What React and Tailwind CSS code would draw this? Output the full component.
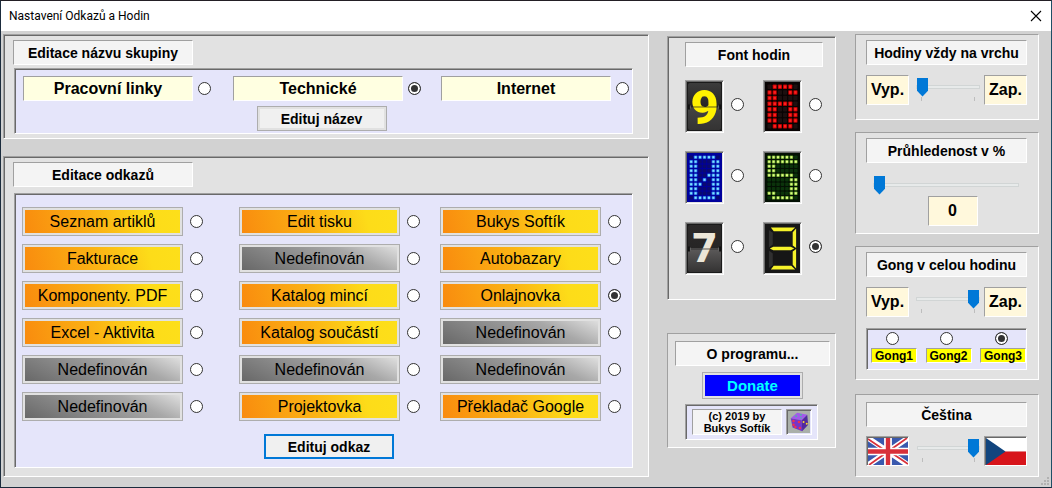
import { useState } from "react";
import clsx from "clsx";

const SUNKEN = "border border-t-[#a0a0a0] border-l-[#a0a0a0] border-r-white border-b-white";
const DEEP = "border border-t-[#a0a0a0] border-l-[#a0a0a0] border-r-white border-b-white shadow-[inset_1px_1px_0_#696969]";

const groups = ["Pracovní linky", "Technické", "Internet"];

const links = [
    ["Seznam artiklů", "Edit tisku", "Bukys Softík"],
    ["Fakturace", null, "Autobazary"],
    ["Komponenty. PDF", "Katalog mincí", "Onlajnovka"],
    ["Excel - Aktivita", "Katalog součástí", null],
    [null, null, null],
    [null, "Projektovka", "Překladač Google"],
];

const six = [".####.", "##..##", "##....", "#####.", "##..##", "##..##", "##..##", ".####."];
const zero = [".#####.", "##...##", "##...##", "##...##", "##..###", "##.#.##", "###..##", "##...##", "##...##", ".#####."];
const five = ["######.", "#######", "##.....", "##.....", "######.", ".....##", ".....##", ".....##", "##...##", ".#####."];

function Radio({ className, ...props }) {
    return (
        <input
            type="radio"
            className={clsx("m-0 size-[13px] shrink-0 appearance-none rounded-full border border-[#333333] bg-white checked:bg-[#333333] checked:shadow-[inset_0_0_0_2px_white]", className)}
            {...props}
        />
    );
}

function Caption({ children, className }) {
    return (
        <h2 className={clsx("flex h-[25px] items-center justify-center bg-[#f4f4f4] text-[14px] leading-4 font-bold whitespace-nowrap", SUNKEN, className)}>
            {children}
        </h2>
    );
}

function LinkButton({ text }) {
    return (
        <button type="button" className="h-[29px] w-[161px] shrink-0 border border-[#adadad] bg-[#e1e1e1] p-0.5">
            <span
                className={clsx(
                    "flex h-full items-center justify-center text-[16px] leading-5 whitespace-nowrap",
                    text
                        ? "bg-[linear-gradient(75deg,#f98b0e,#fbb214_45%,#fddc19_80%,#fddf1a)]"
                        : "bg-[linear-gradient(25deg,#686868,#a8a8a8_70%,#dedede)]"
                )}
            >
                {text || "Nedefinován"}
            </span>
        </button>
    );
}

function Slider({ label, value, onChange, max, ticks }) {
    return (
        <div className="min-w-0 flex-1">
            <input
                type="range"
                aria-label={label}
                min="0"
                max={max}
                value={value}
                onChange={e => onChange(Number(e.target.value))}
                className="block h-[19px] w-full appearance-none bg-transparent [&::-webkit-slider-runnable-track]:h-1 [&::-webkit-slider-runnable-track]:border [&::-webkit-slider-runnable-track]:border-[#d1d5d5] [&::-webkit-slider-runnable-track]:bg-[#e7eaea] [&::-webkit-slider-thumb]:-mt-2 [&::-webkit-slider-thumb]:h-[19px] [&::-webkit-slider-thumb]:w-[11px] [&::-webkit-slider-thumb]:appearance-none [&::-webkit-slider-thumb]:bg-[#0078d7] [&::-webkit-slider-thumb]:[clip-path:polygon(0_0,100%_0,100%_70%,50%_100%,0_70%)]"
            />
            {ticks && (
                <div className="flex justify-between px-[5px] pt-px">
                    <span className="h-1 w-px bg-[#bdbdbd]" />
                    <span className="h-1 w-px bg-[#bdbdbd]" />
                </div>
            )}
        </div>
    );
}

function ValueBox({ children, className }) {
    return (
        <span className={clsx("flex h-[30px] items-center justify-center bg-[#fff8dc] text-[16px] leading-5 font-bold", SUNKEN, className)}>
            {children}
        </span>
    );
}

function OnOffSlider({ label, initial }) {
    const [value, setValue] = useState(initial);
    return (
        <div className="mt-2.5 flex">
            <ValueBox className="w-[43px]">Vyp.</ValueBox>
            <div className="mr-1 ml-[7px] flex flex-1 pt-0.5">
                <Slider label={label} max="1" value={value} onChange={setValue} ticks />
            </div>
            <ValueBox className="w-[43px]">Zap.</ValueBox>
        </div>
    );
}

function DotMatrix({ rows, back, off, on, core }) {
    const stepX = 32 / rows[0].length;
    const stepY = 46 / rows.length;
    const w = stepX * 0.8;
    const h = stepY * 0.8;
    return (
        <svg viewBox="0 0 36 50" className="size-full" preserveAspectRatio="none" aria-hidden="true">
            <rect width="36" height="50" fill={back} />
            {rows.map((row, y) =>
                [...row].map((dot, x) => (
                    <g key={`${x}-${y}`} transform={`translate(${2 + (x + 0.5) * stepX} ${2 + (y + 0.5) * stepY})`}>
                        <rect x={-w / 2} y={-h / 2} width={w} height={h} rx="0.8" fill={dot === "#" ? on : off} />
                        {dot === "#" && <rect x={-w / 3.4} y={-h / 3.4} width={w / 1.7} height={h / 1.7} fill={core} />}
                    </g>
                ))
            )}
        </svg>
    );
}

function FlipDigit({ id, top, bottom, children }) {
    return (
        <svg viewBox="0 0 36 50" className="size-full overflow-visible" preserveAspectRatio="none" aria-hidden="true">
            <defs>
                <linearGradient id={id} x2="0" y2="1">
                    <stop offset="0" stopColor={top} />
                    <stop offset="0.5" stopColor="#262525" />
                    <stop offset="0.5" stopColor={bottom} />
                    <stop offset="1" stopColor="#343333" />
                </linearGradient>
            </defs>
            <rect width="36" height="50" fill="#1a1a1a" />
            <rect x="1" y="1" width="34" height="48" rx="2" fill={`url(#${id})`} />
            {children}
            <path d="M1 25.500H35" stroke="#222" strokeWidth="1" opacity="0.75" />
            <path d="M1 23h2v5h-2zM33 23h2v5h-2z" fill="#111" />
            <path d="M3.500 24v3M32.500 24v3" stroke="#777" strokeWidth="0.7" />
        </svg>
    );
}

function SegmentDigit() {
    return (
        <svg viewBox="0 0 36 50" className="size-full" preserveAspectRatio="none" aria-hidden="true">
            <rect width="36" height="50" fill="#161616" />
            <path d="M4 6l4 3v12l-4 3zM4 27l4 3v12l-4 3z" fill="#303030" />
            <path d="M6 3.500h25l-4 4h-18zM6 46.500h25l-4-4h-18zM5 25l3.500-1.800h18l3.500 1.800-3.500 1.800h-18zM32 4.500v20l-3.500-2.500v-13.500zM32 45.500v-20l-3.500 2.500v13.500z" fill="#f6f22a" />
        </svg>
    );
}

const clockFonts = [
    [
        {
            name: "Žlutý překlápěcí",
            art: (
                <FlipDigit id="flip9" top="#3c3c3c" bottom="#444444">
                    <text x="18" y="43" textAnchor="middle" fontSize="50" fontWeight="900" fontFamily="Roboto, sans-serif" fill="#fff200">9</text>
                </FlipDigit>
            ),
        },
        { name: "Červený bodový", art: <DotMatrix rows={six} back="#080303" off="#1c1010" on="#b90000" core="#ff1d1d" /> },
    ],
    [
        { name: "Modrý bodový", art: <DotMatrix rows={zero} back="#00009c" off="#0a0a70" on="#1f62dc" core="#7fe4ff" /> },
        { name: "Zelený bodový", art: <DotMatrix rows={five} back="#031003" off="#0b330b" on="#5c9a26" core="#e0fb84" /> },
    ],
    [
        {
            name: "Bílý překlápěcí",
            art: (
                <FlipDigit id="flip7" top="#2c2a2a" bottom="#5c5a5a">
                    <text x="18" y="39" textAnchor="middle" fontSize="40" fontWeight="700" fontFamily="'DejaVu Sans', sans-serif" fill="#ece6d8">7</text>
                </FlipDigit>
            ),
        },
        { name: "Segmentový", art: <SegmentDigit /> },
    ],
];

function Dice() {
    return (
        <svg viewBox="0 0 24 24" className="size-full" aria-hidden="true">
            <rect width="24" height="24" fill="#aab0aa" />
            <path d="M3 8L10 2l11 2-6 6z" fill="#a259ec" />
            <path d="M3 8l12 2 .5 12L5 18z" fill="#7435c9" />
            <path d="M15 10l6-6 1 11-6.500 7z" fill="#512a9e" />
            <g fill="#f0304e">
                <circle cx="6" cy="11" r="1.400" />
                <circle cx="12" cy="12" r="1.400" />
                <circle cx="6" cy="15" r="1.400" />
                <circle cx="13" cy="18.500" r="1.400" />
                <circle cx="8" cy="17.500" r="1.400" />
            </g>
            <path d="M8 5h2v1.300H8zM13 3.500h2v1.300h-2zM13 7h2v1.300h-2z" fill="#35cf8c" />
            <circle cx="17" cy="12" r="1.100" fill="#ffd52e" />
            <circle cx="20.500" cy="14" r="1.100" fill="#ffd52e" />
        </svg>
    );
}

function FlagUK() {
    return (
        <svg viewBox="0 0 41 28" className="size-full" preserveAspectRatio="none" aria-hidden="true">
            <rect width="41" height="28" fill="#3a58ad" />
            <path d="M0 0l41 28M41 0L0 28" stroke="#fff" strokeWidth="5.500" />
            <path d="M0 1l19 13M41 27L22 14M40 0L22 13M1 28l18-13" stroke="#d8303a" strokeWidth="1.800" />
            <path d="M20.500 0v28M0 14h41" stroke="#fff" strokeWidth="8" />
            <path d="M20.500 0v28M0 14h41" stroke="#d8303a" strokeWidth="4.500" />
        </svg>
    );
}

function FlagCZ() {
    return (
        <svg viewBox="0 0 41 28" className="size-full" preserveAspectRatio="none" aria-hidden="true">
            <rect width="41" height="14" fill="#fff" />
            <rect y="14" width="41" height="14" fill="#d7141a" />
            <path d="M0 0l20 14L0 28z" fill="#11457e" />
        </svg>
    );
}

export default function App() {
    const [opacity, setOpacity] = useState(0);
    const [language, setLanguage] = useState(1);

    return (
        <div className="relative flex min-h-screen flex-col border border-t-[#231f25] border-r-[#1f4f66] border-b-[#1b2b3c] border-l-[#1b2b3c] bg-[#d2d2d2] font-['Liberation_Sans',Arial,sans-serif] text-black">
            <header className="flex h-[30px] items-center justify-between bg-white pr-[9px] pl-2">
                <h1 className="font-[Roboto,'Noto_Sans',sans-serif] text-[12px] leading-4">Nastavení Odkazů a Hodin</h1>
                <button type="button" aria-label="Zavřít" className="size-3">
                    <svg viewBox="0 0 12 12" className="size-full" aria-hidden="true">
                        <path d="M1 1l10 10M11 1L1 11" stroke="#000" strokeWidth="1.100" />
                    </svg>
                </button>
            </header>

            <main className="flex flex-1 items-start pt-[3px] pr-3 pl-0.5">
                <div className="mr-[18px] min-w-0 flex-1">
                    <section className={clsx("bg-[#e2e2e2] pt-[5px] pr-[15px] pb-1 pl-[9px]", DEEP)}>
                        <Caption className="w-[180px]">Editace názvu skupiny</Caption>
                        <div className={clsx("mt-[3px] ml-px bg-[#e5e5fa] pt-[7px] pb-0.5 pl-2", DEEP)}>
                            <div className="grid grid-cols-[210fr_208fr_191fr]">
                                {groups.map((name, i) => (
                                    <div key={name} className="flex items-center gap-[5px]">
                                        <label htmlFor={`group-${i}`} className={clsx("flex h-[25px] w-[170px] items-center justify-center bg-[#ffffe1] text-[16px] leading-5 font-bold", SUNKEN)}>
                                            {name}
                                        </label>
                                        <Radio id={`group-${i}`} name="group" defaultChecked={i === 1} />
                                    </div>
                                ))}
                            </div>
                            <div className="mt-[5px] flex justify-center pr-3">
                                <button type="button" className="h-[25px] w-[130px] border border-[#adadad] bg-[#f0f0f0] text-[14px] leading-4 font-bold shadow-[inset_0_0_0_2px_#e1e1e1]">
                                    Edituj název
                                </button>
                            </div>
                        </div>
                    </section>

                    <section className={clsx("mt-[17px] bg-[#e2e2e2] pt-[5px] pr-[15px] pb-2 pl-[9px]", DEEP)}>
                        <Caption className="w-[180px]">Editace odkazů</Caption>
                        <div className={clsx("mt-1.5 ml-px bg-[#e5e5fa] pt-[13px] pb-2 pl-[7px]", DEEP)}>
                            <div className="grid grid-cols-[217fr_201fr_192fr] gap-y-2">
                                {links.flatMap((row, y) =>
                                    row.map((text, x) => (
                                        <div key={`${x}-${y}`} className="flex items-center gap-[7px]">
                                            <LinkButton text={text} />
                                            <Radio name="link" aria-label={text || "Nedefinován"} defaultChecked={text === "Onlajnovka"} />
                                        </div>
                                    ))
                                )}
                            </div>
                            <div className="mt-[13px] flex justify-center pl-1">
                                <button type="button" className="h-[25px] w-[130px] border-2 border-[#0078d7] bg-[#f0f0f0] text-[14px] leading-4 font-bold">
                                    Edituj odkaz
                                </button>
                            </div>
                        </div>
                    </section>
                </div>

                <div className="mt-0.5 mr-[19px] w-[169px] shrink-0">
                    <section className={clsx("bg-[#e2e2e2] px-[17px] pt-[5px] pb-6", DEEP)}>
                        <Caption className="w-[138px]">Font hodin</Caption>
                        <div className="mt-[13px] flex flex-col gap-[18px]">
                            {clockFonts.map((row, y) => (
                                <div key={y} className="flex gap-[19px]">
                                    {row.map((font, x) => (
                                        <label key={font.name} className="flex items-center gap-[7px]">
                                            <span className={clsx("h-[53px] w-[39px] p-px", DEEP)}>{font.art}</span>
                                            <Radio name="font" aria-label={font.name} className="mb-1" defaultChecked={y === 2 && x === 1} />
                                        </label>
                                    ))}
                                </div>
                            ))}
                        </div>
                    </section>

                    <section className={clsx("mt-[33px] bg-[#e2e2e2] pt-[7px] pr-[5px] pb-[7px] pl-[7px]", SUNKEN)}>
                        <Caption>O programu...</Caption>
                        <button type="button" className="mx-auto mt-1.5 block h-[27px] w-[101px] border border-[#adadad] bg-[#e1e1e1] p-0.5 text-[15px] leading-4 font-bold text-[#00ffff]">
                            <span className="flex h-full items-center justify-center bg-[#0000ff]">Donate</span>
                        </button>
                        <div className={clsx("mt-[5px] ml-[10px] flex w-[133px] gap-1 bg-[#e5e5fa] py-1 pl-1.5", DEEP)}>
                            <p className={clsx("h-[26px] w-[90px] bg-[#f4f4f4] text-center text-[11px] leading-3 font-bold", SUNKEN)}>
                                (c) 2019 by
                                <br />
                                Bukys Softík
                            </p>
                            <span className={clsx("size-[26px] p-px", DEEP)}>
                                <Dice />
                            </span>
                        </div>
                    </section>
                </div>

                <div className="w-[184px] shrink-0">
                    <section className={clsx("bg-[#e2e2e2] pt-[5px] pr-[11px] pb-3.5 pl-[10px]", SUNKEN)}>
                        <Caption>Hodiny vždy na vrchu</Caption>
                        <OnOffSlider label="Hodiny vždy na vrchu" initial={0} />
                    </section>

                    <section className={clsx("mt-3 bg-[#e2e2e2] pt-[5px] pr-[11px] pb-[7px] pl-[10px]", SUNKEN)}>
                        <Caption>Průhledenost v %</Caption>
                        <div className="mt-3 flex pr-2 pl-[7px]">
                            <Slider label="Průhledenost v %" max="100" value={opacity} onChange={setOpacity} />
                        </div>
                        <div className="mt-0.5 flex justify-center pl-3">
                            <ValueBox className="w-[50px]">{opacity}</ValueBox>
                        </div>
                    </section>

                    <section className={clsx("mt-3 bg-[#e2e2e2] pt-[5px] pr-[11px] pb-[9px] pl-[10px]", SUNKEN)}>
                        <Caption>Gong v celou hodinu</Caption>
                        <OnOffSlider label="Gong v celou hodinu" initial={1} />
                        <div className={clsx("mt-[11px] flex h-[42px] justify-between overflow-hidden bg-[#e5e5fa] pt-[3px] pl-1", DEEP)}>
                            {["Gong1", "Gong2", "Gong3"].map(name => (
                                <label key={name} className="flex flex-col items-center gap-[3px] text-[12px] leading-3 font-bold">
                                    <Radio name="gong" className="mr-1" defaultChecked={name === "Gong3"} />
                                    <span className={clsx("flex h-[15px] w-[46px] items-center justify-center bg-[#ffff00]", SUNKEN)}>{name}</span>
                                </label>
                            ))}
                        </div>
                    </section>

                    <section className={clsx("mt-3.5 bg-[#e2e2e2] pt-[7px] pr-[11px] pb-[10px] pl-[10px]", SUNKEN)}>
                        <Caption>{language ? "Čeština" : "English"}</Caption>
                        <div className="mt-[9px] flex">
                            <span className={clsx("h-[30px] w-[43px] pt-px pl-px", DEEP)}>
                                <FlagUK />
                            </span>
                            <div className="mr-1 ml-2 flex flex-1 pt-0.5">
                                <Slider label="Jazyk" max="1" value={language} onChange={setLanguage} ticks />
                            </div>
                            <span className={clsx("h-[30px] w-[43px] pt-px pl-px", DEEP)}>
                                <FlagCZ />
                            </span>
                        </div>
                    </section>
                </div>
            </main>

            <svg viewBox="0 0 10 10" className="absolute right-px bottom-px size-2.5" fill="#b2b2b2" aria-hidden="true">
                <path d="M7 1h2v2H7zM4 4h2v2H4zM7 4h2v2H7zM1 7h2v2H1zM4 7h2v2H4zM7 7h2v2H7z" />
            </svg>
        </div>
    );
}
